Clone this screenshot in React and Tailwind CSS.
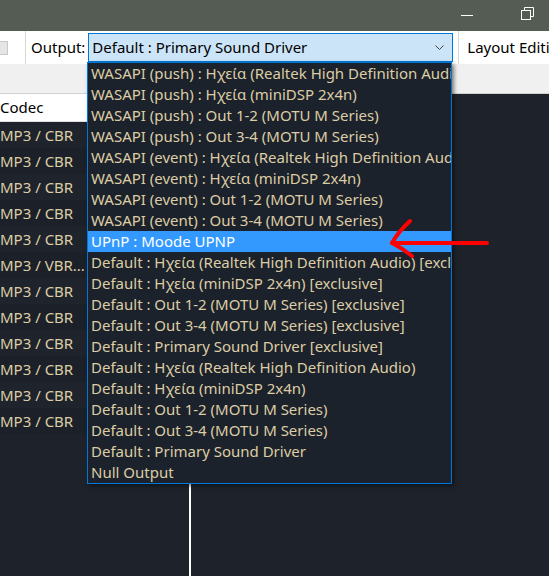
import React from 'react';

const font = { fontFamily: '"Noto Sans", "Open Sans", sans-serif' };

const options = [
  'WASAPI (push) : Ηχεία (Realtek High Definition Audio)',
  'WASAPI (push) : Ηχεία (miniDSP 2x4n)',
  'WASAPI (push) : Out 1-2 (MOTU M Series)',
  'WASAPI (push) : Out 3-4 (MOTU M Series)',
  'WASAPI (event) : Ηχεία (Realtek High Definition Audio)',
  'WASAPI (event) : Ηχεία (miniDSP 2x4n)',
  'WASAPI (event) : Out 1-2 (MOTU M Series)',
  'WASAPI (event) : Out 3-4 (MOTU M Series)',
  'UPnP : Moode UPNP',
  'Default : Ηχεία (Realtek High Definition Audio) [exclusive]',
  'Default : Ηχεία (miniDSP 2x4n) [exclusive]',
  'Default : Out 1-2 (MOTU M Series) [exclusive]',
  'Default : Out 3-4 (MOTU M Series) [exclusive]',
  'Default : Primary Sound Driver [exclusive]',
  'Default : Ηχεία (Realtek High Definition Audio)',
  'Default : Ηχεία (miniDSP 2x4n)',
  'Default : Out 1-2 (MOTU M Series)',
  'Default : Out 3-4 (MOTU M Series)',
  'Default : Primary Sound Driver',
  'Null Output',
];

const codecs = [
  'MP3 / CBR', 'MP3 / CBR', 'MP3 / CBR', 'MP3 / CBR', 'MP3 / CBR', 'MP3 / VBR...',
  'MP3 / CBR', 'MP3 / CBR', 'MP3 / CBR', 'MP3 / CBR', 'MP3 / CBR', 'MP3 / CBR',
];

export default function App() {
  return (
    <div className="relative w-[549px] h-[576px] overflow-hidden bg-[#1e232b] text-[15px]" style={font}>
      {/* title bar */}
      <div className="h-[31px] bg-[#545c53] flex items-center justify-end">
        <svg width="12" height="2" className="mr-[48px] shrink-0" viewBox="0 0 12 2">
          <rect width="12" height="1" fill="#fff" />
        </svg>
        <svg width="14" height="14" className="mr-[14px] mb-[4px] shrink-0" viewBox="0 0 14 14" fill="none" stroke="#fff" strokeWidth="1">
          <rect x="0.5" y="3.5" width="9" height="9" />
          <path d="M3.5 3.5V0.5h9v9h-3" />
        </svg>
      </div>

      {/* toolbar */}
      <div className="h-[33px] bg-white flex items-center overflow-hidden">
        <div className="shrink-0 w-[8px] h-[14px] bg-[#e5e5e5] border border-l-0 border-[#c8c8c8]" />
        <div className="shrink-0 ml-[17px] w-px h-full bg-[#d6d6d6]" />
        <span className="shrink-0 ml-[5px] text-black">Output:</span>
        <div className="shrink-0 ml-[3px] w-[365px] h-[29px] bg-[#cce4f7] border border-[#0078d7] flex items-center justify-between pl-[3px] pr-[8px]">
          <span className="text-black">Default : Primary Sound Driver</span>
          <svg width="9" height="5" viewBox="0 0 9 5" fill="none" stroke="#444" strokeWidth="1">
            <path d="M0.5 0.5l4 4 4-4" />
          </svg>
        </div>
        <div className="shrink-0 ml-[5px] w-px h-full bg-[#d6d6d6]" />
        <span className="shrink-0 ml-[8px] text-black whitespace-nowrap">Layout Editing</span>
      </div>

      {/* gray strip */}
      <div className="h-[30px] bg-[#f0f0f0] border-b border-[#d0d0d0]" />

      {/* panels */}
      <div className="flex h-[482px]">
        <div className="w-[189px]">
          <div className="h-[28px] bg-white border-b border-[#e0e0e0] flex items-center text-black">Codec</div>
          {codecs.map((c, i) => (
            <div
              key={i}
              className={`h-[26px] flex items-center text-[#dccda6] whitespace-nowrap ${i % 2 ? 'bg-[#1c2129]' : 'bg-[#1f242c]'}`}
            >
              {c}
            </div>
          ))}
        </div>
        <div className="w-[2px] bg-white" />
        <div className="flex-1 bg-[#1e232b]" />
      </div>

      {/* open dropdown list */}
      <div className="absolute left-[87px] top-[62px] w-[365px] h-[422px] bg-[#1c222b] border border-[#0078d7] overflow-hidden shadow-[2px_2px_4px_rgba(0,0,0,0.5)]">
        {options.map((o, i) => (
          <div
            key={i}
            className={`h-[21px] flex items-center pl-[3px] whitespace-nowrap ${i === 8 ? 'bg-[#3399ff] text-white' : 'text-[#dccda6]'}`}
          >
            {o}
          </div>
        ))}
      </div>

      {/* red annotation arrow */}
      <svg className="absolute left-0 top-0 pointer-events-none" width="549" height="576" viewBox="0 0 549 576" fill="none" stroke="#ff0000" strokeWidth="4" strokeLinecap="round" strokeLinejoin="round">
        <path d="M487 243 L392 243" />
        <path d="M410 221 Q398 232 392 243 Q402 248 412 256" />
      </svg>
    </div>
  );
}
